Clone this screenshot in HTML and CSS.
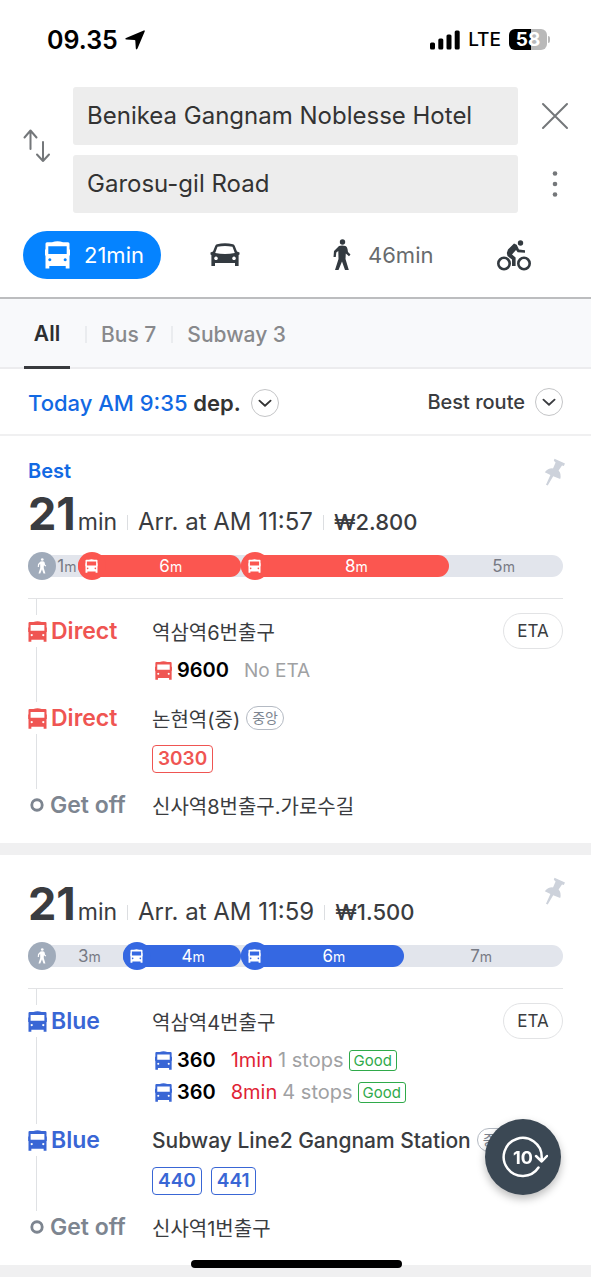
FILE: index.html
```html
<!DOCTYPE html>
<html lang="en">
<head>
<meta charset="utf-8">
<meta name="viewport" content="width=device-width, initial-scale=1">
<title>Transit routes</title>
<link rel="stylesheet" href="styles.css">
</head>
<body>
<svg class="sprite" aria-hidden="true">
  <symbol id="bus" viewBox="0 0 25 28">
    <path fill-rule="evenodd" d="M7 1.300Q12.500 -.6 18 1.300H23Q24.500 1.300 24.500 2.800V8.500H25V14.500H24.500V27.500H20.700V25H4.300V27.500H.5V14.500H0V8.500H.5V2.800Q.5 1.300 2 1.300ZM3.300 5.200V13H21.700V5.200ZM4.800 17.200a1.500 1.500 0 1 0 .01 0ZM20.200 17.200a1.500 1.500 0 1 0 .01 0Z"/>
  </symbol>
  <symbol id="car" viewBox="0 0 30 24">
    <path fill-rule="evenodd" d="M7 1.200Q15 -.6 23 1.200Q24.200 1.500 24.800 3L27 8.500L29.500 9.500V11.500L28.600 12V23H25V20H5V23H1.400V12L.5 11.500V9.500L3 8.500L5.200 3Q5.800 1.500 7 1.200ZM7.500 3.800L5.200 10Q15 11.800 24.800 10L22.500 3.800Q15 2.200 7.500 3.800ZM6 13.500a1.800 1.800 0 1 0 .01 0ZM24 13.500a1.800 1.800 0 1 0 .01 0Z"/>
  </symbol>
  <symbol id="walk" viewBox="0 0 18 32">
    <circle cx="9.500" cy="3" r="2.700"/>
    <path d="M6 7Q9 6 12.500 7Q14 7.500 14.500 10L15 13L17.500 15.500L16 17.200L12.800 14.500L12.500 20L15.800 31H12L9 22.500L5.500 31H2L5.500 20L5.300 12L3.300 13.500L2.800 18H.5L1 12Z"/>
  </symbol>
  <symbol id="bike" viewBox="0 0 34 31">
    <g fill="none" stroke="currentColor" stroke-width="2.600"><circle cx="7" cy="23.500" r="5.700"/><circle cx="27" cy="23.500" r="5.700"/></g>
    <circle cx="23.500" cy="3" r="2.700"/>
    <path d="M17 3.500L19.700 4.800L22 9.500L28 10.200V12.800L20.700 12.300L19 10L15 14.500L18.600 17.500V26H15V19.500L10.500 16L9.800 13L11 9.500Z"/>
  </symbol>
  <symbol id="pin" viewBox="0 0 22 28">
    <path d="M10.500 .8L21 5.500L19.800 8L18 7.600L14.600 12.600Q17.600 16 16.200 21L9.200 18.300L3.700 27.500L2 26.800L6.400 17L.8 14.300Q4 10 9 10.400L11.600 4.500L9.800 2.800Z"/>
  </symbol>
  <symbol id="chevron" viewBox="0 0 28 28">
    <path d="M8 11.500L14 17L20 11.500" fill="none" stroke="currentColor" stroke-width="2" stroke-linecap="round" stroke-linejoin="round"/>
  </symbol>
</svg>

<div class="status">
  <div class="status-time">09.35
    <svg class="arrow" viewBox="0 0 20 20"><path d="M18.800 .4Q20 .2 19.700 1.500L12.500 18.600Q11.600 20.300 10.800 18.500L10.300 10.600Q10.200 10 9.500 9.900L1.300 9.500Q-.6 8.800 1 7.900Z"/></svg>
  </div>
  <div class="status-right">
    <svg class="signal" viewBox="0 0 30 20"><rect x="0" y="12.500" width="5" height="7" rx="1.500"/><rect x="8.300" y="8.500" width="5" height="11" rx="1.500"/><rect x="16.500" y="4.500" width="5" height="15" rx="1.500"/><rect x="24.700" y=".5" width="5" height="19" rx="1.500"/></svg>
    <span>LTE</span>
    <span class="battery">58</span>
  </div>
</div>

<header class="search">
  <button class="icon-button" aria-label="Swap">
    <svg class="swap" viewBox="0 0 28 34"><path d="M7.500 20V2M1.500 8.500L7.500 1.500L13.500 8.500M20 13V32M14 25.500L20 32L26 25.500"/></svg>
  </button>
  <div class="fields">
    <input type="text" aria-label="Start" value="Benikea Gangnam Noblesse Hotel">
    <input type="text" aria-label="Destination" value="Garosu-gil Road">
  </div>
  <div class="search-actions">
    <button class="icon-button" aria-label="Close"><svg class="close" viewBox="0 0 28 28"><path d="M2 2L26 26M26 2L2 26"/></svg></button>
    <button class="icon-button" aria-label="More"><svg class="more" viewBox="0 0 6 28"><circle cx="3" cy="3.500" r="2.300"/><circle cx="3" cy="14" r="2.300"/><circle cx="3" cy="24.500" r="2.300"/></svg></button>
  </div>
</header>

<nav class="modes">
  <button class="mode mode-active"><svg class="mode-bus"><use href="#bus"/></svg>21min</button>
  <button class="mode" aria-label="Car"><svg class="mode-car"><use href="#car"/></svg></button>
  <button class="mode"><svg class="mode-walk"><use href="#walk"/></svg>46min</button>
  <button class="mode" aria-label="Bicycle"><svg class="mode-bike"><use href="#bike"/></svg></button>
</nav>

<nav class="tabs">
  <button class="tab tab-active">All</button>
  <button class="tab">Bus 7</button>
  <button class="tab">Subway 3</button>
</nav>

<div class="filters">
  <button class="depart"><span><b>Today AM 9:35</b> dep.</span><svg class="chevron"><use href="#chevron"/></svg></button>
  <button class="sort">Best route<svg class="chevron"><use href="#chevron"/></svg></button>
</div>

<main>
  <article class="route red">
    <button class="pin" aria-label="Pin route"><svg><use href="#pin"/></svg></button>
    <p class="best">Best</p>
    <h2 class="summary"><strong>21</strong><span class="unit">min</span><span class="fact">Arr. at AM 11:57</span><span class="fact fare">₩2.800</span></h2>
    <div class="bar">
      <div class="leg walk" style="flex-grow:50"><i><svg><use href="#walk"/></svg></i><span>1<small>m</small></span></div>
      <div class="leg ride" style="flex-grow:163"><i><svg><use href="#bus"/></svg></i><span>6<small>m</small></span></div>
      <div class="leg ride" style="flex-grow:209"><i><svg><use href="#bus"/></svg></i><span>8<small>m</small></span></div>
      <div class="leg rest" style="flex-grow:114"><span>5<small>m</small></span></div>
    </div>
    <div class="steps">
      <div class="step">
        <div class="step-side"><div class="step-label"><svg><use href="#bus"/></svg>Direct</div></div>
        <div class="step-body">
          <div class="stop" lang="ko">역삼역6번출구</div>
          <div class="arrivals"><div class="arrival"><svg><use href="#bus"/></svg><b>9600</b><span class="wait">No ETA</span></div></div>
        </div>
        <button class="eta">ETA</button>
      </div>
      <div class="step">
        <div class="step-side"><div class="step-label"><svg><use href="#bus"/></svg>Direct</div></div>
        <div class="step-body">
          <div class="stop" lang="ko">논현역(중)<span class="lane">중앙</span></div>
          <div class="tags"><span>3030</span></div>
        </div>
      </div>
      <div class="step">
        <div class="step-side"><div class="step-label step-end"><svg viewBox="0 0 19 19"><circle cx="9.500" cy="9.500" r="5.500"/></svg>Get off</div></div>
        <div class="step-body"><div class="stop" lang="ko">신사역8번출구.가로수길</div></div>
      </div>
    </div>
  </article>

  <article class="route blue">
    <button class="pin" aria-label="Pin route"><svg><use href="#pin"/></svg></button>
    <h2 class="summary"><strong>21</strong><span class="unit">min</span><span class="fact">Arr. at AM 11:59</span><span class="fact fare">₩1.500</span></h2>
    <div class="bar">
      <div class="leg walk" style="flex-grow:95"><i><svg><use href="#walk"/></svg></i><span>3<small>m</small></span></div>
      <div class="leg ride" style="flex-grow:118"><i><svg><use href="#bus"/></svg></i><span>4<small>m</small></span></div>
      <div class="leg ride" style="flex-grow:164"><i><svg><use href="#bus"/></svg></i><span>6<small>m</small></span></div>
      <div class="leg rest" style="flex-grow:159"><span>7<small>m</small></span></div>
    </div>
    <div class="steps">
      <div class="step">
        <div class="step-side"><div class="step-label"><svg><use href="#bus"/></svg>Blue</div></div>
        <div class="step-body">
          <div class="stop" lang="ko">역삼역4번출구</div>
          <div class="arrivals">
            <div class="arrival"><svg><use href="#bus"/></svg><b>360</b><em>1min</em><span>1 stops</span><mark>Good</mark></div>
            <div class="arrival"><svg><use href="#bus"/></svg><b>360</b><em>8min</em><span>4 stops</span><mark>Good</mark></div>
          </div>
        </div>
        <button class="eta">ETA</button>
      </div>
      <div class="step">
        <div class="step-side"><div class="step-label"><svg><use href="#bus"/></svg>Blue</div></div>
        <div class="step-body">
          <div class="stop">Subway Line2 Gangnam Station<span class="lane" lang="ko">중앙</span></div>
          <div class="tags"><span>440</span><span>441</span></div>
        </div>
      </div>
      <div class="step">
        <div class="step-side"><div class="step-label step-end"><svg viewBox="0 0 19 19"><circle cx="9.500" cy="9.500" r="5.500"/></svg>Get off</div></div>
        <div class="step-body"><div class="stop" lang="ko">신사역1번출구</div></div>
      </div>
    </div>
  </article>
</main>

<button class="refresh" aria-label="Refresh">
  <svg viewBox="0 0 46 42"><path d="M36.500 31.500A19 19 0 1 1 39.700 21V25M34 20L39.700 25.500L45 20"/></svg>
  <span>10</span>
</button>
<div class="home-bar"></div>
</body>
</html>
```
FILE: styles.css
```css
* { box-sizing: border-box; }
body {
  margin: 0;
  background: #fff;
  color: #3a3c40;
  font-family: Inter, "Noto Sans CJK KR", sans-serif;
  overflow: hidden;
}
button { margin: 0; padding: 0; border: 0; background: none; color: inherit; font: inherit; }
svg { display: block; flex: none; fill: currentColor; }
.sprite { position: absolute; width: 0; height: 0; }

.status {
  display: flex; justify-content: space-between; align-items: center;
  height: 87px; padding: 0 44px 8px 47px; color: #000;
}
.status-time { display: flex; align-items: center; gap: 7px; font-size: 25px; font-weight: 600; }
.arrow { width: 20px; height: 20px; }
.status-right { display: flex; align-items: center; gap: 8px; font-size: 19px; font-weight: 500; }
.signal { width: 30px; height: 20px; }
.battery {
  position: relative; width: 38px; height: 21px; border-radius: 6px;
  background: linear-gradient(90deg, #000 58%, #b9b9b9 58%);
  color: #fff; font-size: 19px; font-weight: 700; line-height: 21px; text-align: center;
}
.battery::after {
  content: ""; position: absolute; top: 7px; right: -3px;
  width: 2px; height: 7px; border-radius: 0 2px 2px 0; background: #b9b9b9;
}

.search { display: flex; }
.icon-button { display: flex; align-items: center; justify-content: center; width: 73px; color: #74777a; }
.icon-button path { fill: none; stroke: currentColor; stroke-width: 2; stroke-linecap: round; stroke-linejoin: round; }
.search > .icon-button { height: 117px; }
.swap { width: 28px; height: 34px; }
.fields { display: grid; gap: 10px; flex: 1; min-width: 0; }
.fields input {
  width: 100%; height: 58px; padding: 0 14px; border: 0; border-radius: 3px;
  background: #ededed; color: #333; font: 400 24px/58px Inter, "Noto Sans CJK KR", sans-serif;
}
.search-actions { display: grid; grid-template-rows: 58px 58px; gap: 10px; }
.close { width: 28px; height: 28px; }
.more { width: 6px; height: 28px; }

.modes {
  display: grid; grid-template-columns: 187fr 123fr 164fr 94fr; justify-items: start; align-items: center;
  padding: 18px 0 18px 23px; border-bottom: 2px solid #bcbdbf; color: #333a40;
}
.mode { display: flex; align-items: center; gap: 14px; height: 48px; font-size: 22px; }
.mode-active { padding: 0 17px 0 22px; border-radius: 24px; background: #0583ff; color: #fff; }
.mode:nth-child(3) { gap: 17px; color: #686b6e; }
.mode-bus { width: 25px; height: 28px; }
.mode-car { width: 30px; height: 24px; }
.mode-walk { width: 18px; height: 32px; color: #333a40; }
.mode-bike { width: 34px; height: 31px; }

.tabs { display: flex; align-items: stretch; height: 70px; padding-left: 24px; background: #f8f9fb; border-bottom: 2px solid #ececee; }
.tab { display: flex; align-items: center; padding-top: 2px; color: #88898c; font-size: 21px; font-weight: 500; }
.tab + .tab::before { content: ""; width: 2px; height: 17px; margin: 0 14px 0 15px; background: #eaecef; }
.tab-active { justify-content: center; width: 46px; margin-bottom: -2px; border-bottom: 3px solid #383a3d; color: #2c2e31; font-weight: 600; }

.filters { display: flex; justify-content: space-between; align-items: center; height: 67px; padding: 0 28px; border-bottom: 2px solid #f0f0f1; }
.depart, .sort { display: flex; align-items: center; gap: 10px; font-weight: 500; }
.depart { padding-top: 3px; font-size: 22px; font-weight: 600; color: #333; }
.depart b { color: #1269e3; font-weight: 500; }
.sort { font-size: 20px; }
.chevron { width: 28px; height: 28px; border: 1px solid #c4c5c7; border-radius: 50%; }

.route { position: relative; padding: 22px 28px; border-bottom: 12px solid #f0f0f1; }
.red { --ride: #fb5650; --line: #ef5552; }
.blue { --ride: #3568e2; --line: #3966d5; }
.pin { position: absolute; top: 22px; right: 25px; color: #cdd2db; }
.pin svg { width: 22px; height: 28px; }
.best { margin: 0 0 2px; color: #1269e3; font-size: 20px; font-weight: 600; line-height: 27px; }
.summary { display: flex; align-items: baseline; margin: 0; font-size: 23px; font-weight: 400; line-height: 54px; }
.summary strong { font-size: 45px; font-weight: 700; }
.unit { margin-left: 2px; }
.fact { font-size: 24px; font-weight: 400; }
.fact.fare { font-size: 22px; font-weight: 500; }
.fact::before { content: ""; display: inline-block; width: 1px; height: 15px; margin: 0 10px; background: #dcdee1; }

.bar { display: flex; align-items: center; height: 28px; margin: 3px 0 18px; color: #777a84; font-size: 17px; line-height: 22px;
  background: linear-gradient(#e2e5ec, #e2e5ec) center / calc(100% - 28px) 22px no-repeat; }
.leg { display: flex; align-items: center; flex-basis: 0; height: 22px; min-width: 0; }
.leg span { flex: 1; padding-right: 5px; text-align: center; white-space: nowrap; }
.leg small { font-size: 14px; }
.leg i { display: flex; align-items: center; justify-content: center; flex: none; width: 28px; height: 28px; border-radius: 50%; background: #a0abba; color: #fff; }
.leg.walk span { padding: 0; }
.walk svg { width: 10px; height: 16px; }
.ride { border-radius: 11px; background: var(--ride); color: #fff; }
.ride i { background: var(--ride); }
.ride svg { width: 13px; height: 14px; }
.rest { border-radius: 0 11px 11px 0; background: #e2e5ec; }

.steps { border-top: 1px solid #e2e3e5; }
.step { display: flex; align-items: stretch; }
.step-side { display: flex; flex-direction: column; flex: none; width: 124px; }
.step-side::after { content: ""; flex: 1; width: 1px; margin-left: 8px; background: #dfe1e4; }
.step:first-child .step-side::before { content: ""; width: 1px; height: 16px; margin-left: 8px; background: #dfe1e4; }
.step-label { display: flex; align-items: center; gap: 4px; height: 32px; color: var(--line); font-size: 23px; font-weight: 600; }
.step-label svg { width: 19px; height: 21px; }
.step-end { color: #7d8590; }
.step-end svg { width: 18px; height: 18px; fill: none; stroke: currentColor; stroke-width: 3; }
.step-body { flex: 1; min-width: 0; padding-bottom: 16px; }
.step:last-child .step-body { padding-bottom: 0; }
.step:first-child .step-body { padding-top: 16px; }
.stop { display: flex; align-items: center; gap: 6px; height: 32px; font-size: 21px; font-weight: 500; white-space: nowrap; }
.stop:lang(ko) { font-size: 20px; font-weight: 400; }
.stop .lane { padding: 0 5px; border: 1px solid #b4bac3; border-radius: 12px; color: #7d8590; font-size: 14px; font-weight: 400; line-height: 22px; }
.arrivals { padding-top: 7px; }
.arrival { display: flex; align-items: center; gap: 5px; height: 32px; padding-left: 3px; color: #a0a1a3; font-size: 20px; }
.arrival svg { width: 17px; height: 19px; color: var(--line); }
.arrival b { margin-right: 10px; color: #000; font-weight: 600; }
.arrival .wait { font-size: 19px; }
.arrival em { color: #e01f35; font-style: normal; }
.arrival mark { padding: 0 4px; border: 1px solid #2faa4a; border-radius: 3px; background: none; color: #2faa4a; font-size: 15px; line-height: 19px; }
.tags { display: flex; gap: 9px; padding-top: 11px; }
.tags span { padding: 0 5px; border: 1px solid var(--line); border-radius: 4px; color: var(--line); font-size: 19px; font-weight: 600; line-height: 26px; }
.eta { width: 60px; height: 36px; margin-top: 14px; border: 1px solid #e2e3e5; border-radius: 18px; font-size: 17px; }

.refresh { position: fixed; right: 30px; bottom: 85px; width: 76px; height: 76px; border-radius: 50%; background: #3b4854; color: #fff; box-shadow: 0 4px 8px #0004; display: grid; place-items: center; }
.refresh svg, .refresh span { grid-area: 1 / 1; }
.refresh svg { width: 46px; height: 42px; margin-left: 4px; fill: none; stroke: #fff; stroke-width: 2.500; stroke-linecap: round; stroke-linejoin: round; }
.refresh span { font-size: 18px; font-weight: 700; }
.home-bar { position: fixed; left: 50%; bottom: 12px; width: 211px; height: 8px; margin-left: -105px; border-radius: 4px; background: #000; }
```
